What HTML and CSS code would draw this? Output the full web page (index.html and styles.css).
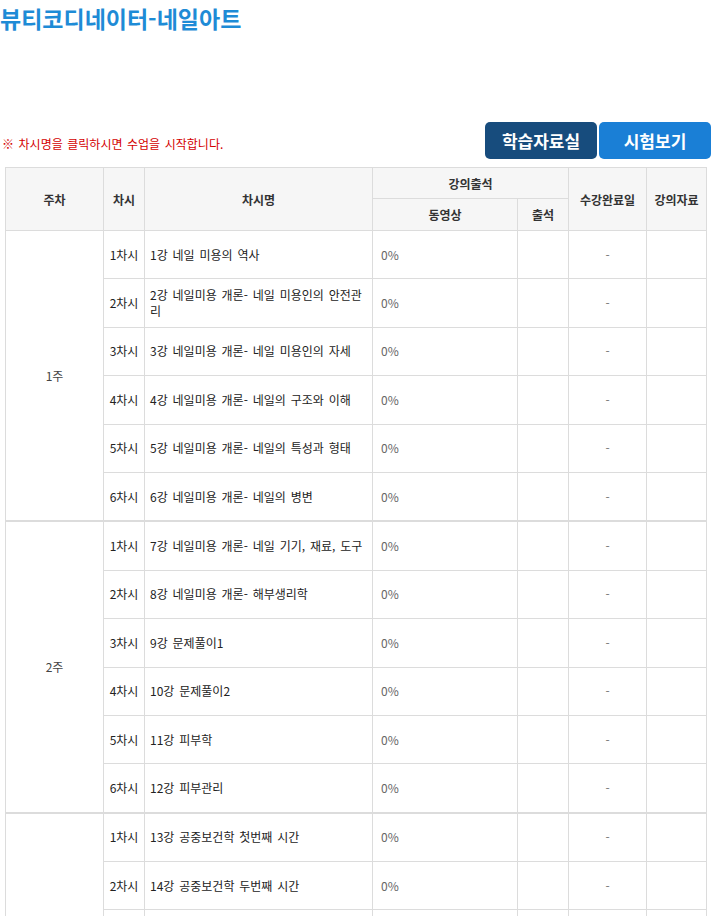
FILE: index.html
```html
<!DOCTYPE html>
<html lang="ko">
<head>
<meta charset="utf-8">
<title>뷰티코디네이터-네일아트</title>
<link rel="stylesheet" href="styles.css">
</head>
<body>
<div class="page">
  <h1 class="title">뷰티코디네이터-네일아트</h1>
  <div class="toolbar">
    <p class="note">※ 차시명을 클릭하시면 수업을 시작합니다.</p>
    <div class="buttons">
      <a class="btn btn-dark" href="#">학습자료실</a>
      <a class="btn btn-blue" href="#">시험보기</a>
    </div>
  </div>
  <table class="lessons">
    <colgroup>
      <col class="c-week"><col class="c-no"><col class="c-name"><col class="c-video"><col class="c-att"><col class="c-date"><col class="c-file">
    </colgroup>
    <thead>
      <tr class="h1">
        <th rowspan="2">주차</th>
        <th rowspan="2">차시</th>
        <th rowspan="2">차시명</th>
        <th colspan="2">강의출석</th>
        <th rowspan="2">수강완료일</th>
        <th rowspan="2">강의자료</th>
      </tr>
      <tr class="h2">
        <th>동영상</th>
        <th>출석</th>
      </tr>
    </thead>
    <tbody>
      <tr><td rowspan="6" class="week">1주</td><td class="no">1차시</td><td class="name">1강 네일 미용의 역사</td><td class="pct">0%</td><td></td><td class="date">-</td><td></td></tr>
      <tr><td class="no">2차시</td><td class="name">2강 네일미용 개론- 네일 미용인의 안전관리</td><td class="pct">0%</td><td></td><td class="date">-</td><td></td></tr>
      <tr><td class="no">3차시</td><td class="name">3강 네일미용 개론- 네일 미용인의 자세</td><td class="pct">0%</td><td></td><td class="date">-</td><td></td></tr>
      <tr><td class="no">4차시</td><td class="name">4강 네일미용 개론- 네일의 구조와 이해</td><td class="pct">0%</td><td></td><td class="date">-</td><td></td></tr>
      <tr><td class="no">5차시</td><td class="name">5강 네일미용 개론- 네일의 특성과 형태</td><td class="pct">0%</td><td></td><td class="date">-</td><td></td></tr>
      <tr><td class="no">6차시</td><td class="name">6강 네일미용 개론- 네일의 병변</td><td class="pct">0%</td><td></td><td class="date">-</td><td></td></tr>

      <tr class="wk"><td rowspan="6" class="week">2주</td><td class="no">1차시</td><td class="name">7강 네일미용 개론- 네일 기기, 재료, 도구</td><td class="pct">0%</td><td></td><td class="date">-</td><td></td></tr>
      <tr><td class="no">2차시</td><td class="name">8강 네일미용 개론- 해부생리학</td><td class="pct">0%</td><td></td><td class="date">-</td><td></td></tr>
      <tr><td class="no">3차시</td><td class="name">9강 문제풀이1</td><td class="pct">0%</td><td></td><td class="date">-</td><td></td></tr>
      <tr><td class="no">4차시</td><td class="name">10강 문제풀이2</td><td class="pct">0%</td><td></td><td class="date">-</td><td></td></tr>
      <tr><td class="no">5차시</td><td class="name">11강 피부학</td><td class="pct">0%</td><td></td><td class="date">-</td><td></td></tr>
      <tr><td class="no">6차시</td><td class="name">12강 피부관리</td><td class="pct">0%</td><td></td><td class="date">-</td><td></td></tr>

      <tr class="wk"><td rowspan="6" class="week">3주</td><td class="no">1차시</td><td class="name">13강 공중보건학 첫번째 시간</td><td class="pct">0%</td><td></td><td class="date">-</td><td></td></tr>
      <tr><td class="no">2차시</td><td class="name">14강 공중보건학 두번째 시간</td><td class="pct">0%</td><td></td><td class="date">-</td><td></td></tr>
      <tr><td class="no">3차시</td><td class="name">15강 공중보건학 세번째 시간</td><td class="pct">0%</td><td></td><td class="date">-</td><td></td></tr>
      <tr><td class="no">4차시</td><td class="name">16강 화장품학</td><td class="pct">0%</td><td></td><td class="date">-</td><td></td></tr>
      <tr><td class="no">5차시</td><td class="name">17강 문제풀이3</td><td class="pct">0%</td><td></td><td class="date">-</td><td></td></tr>
      <tr><td class="no">6차시</td><td class="name">18강 문제풀이4</td><td class="pct">0%</td><td></td><td class="date">-</td><td></td></tr>
    </tbody>
  </table>
</div>
</body>
</html>
```
FILE: styles.css
```css
html, body {
  margin: 0;
  padding: 0;
  background: #fff;
}
body {
  font-family: "Noto Sans CJK KR", "Noto Sans", sans-serif;
  color: #333;
}
.page {
  width: 711px;
  padding-top: 3px;
}
.title {
  margin: 0;
  font-size: 23px;
  line-height: 30px;
  font-weight: bold;
  color: #1e8bd6;
}
.toolbar {
  display: flex;
  justify-content: space-between;
  align-items: center;
  margin-top: 89px;
  padding-left: 2px;
}
.note {
  margin: 6px 0 0;
  font-size: 12px;
  word-spacing: 1.2px;
  color: #d40000;
}
.buttons {
  display: flex;
  gap: 2px;
}
.btn {
  width: 112px;
  height: 37px;
  border-radius: 5px;
  display: flex;
  align-items: center;
  justify-content: center;
  color: #fff;
  font-size: 17px;
  font-weight: bold;
  text-decoration: none;
}
.btn-dark { background: #174c7d; }
.btn-blue { background: #1a7fd6; }

.lessons {
  margin: 8px 0 0 5px;
  width: 701px;
  border-collapse: collapse;
  table-layout: fixed;
  font-size: 12px;
}
.c-week { width: 98px; }
.c-no { width: 41px; }
.c-name { width: 228px; }
.c-video { width: 145px; }
.c-att { width: 51px; }
.c-date { width: 78px; }
.c-file { width: 60px; }

.lessons th {
  background: #f6f6f6;
  border: 1px solid #dcdcdc;
  font-weight: bold;
  color: #333;
  padding: 0;
}
.lessons .h1 th { height: 30px; }
.lessons .h2 th { height: 31px; }

.lessons td {
  border: 1px solid #dcdcdc;
  height: 47.4px;
  padding: 0;
  color: #333;
  line-height: 16px;
}
.lessons tr.wk td { border-top: 2px solid #dcdcdc; }
.lessons td.week { text-align: center; color: #444; }
.lessons td.no { text-align: center; color: #222; }
.lessons td.name { padding: 0 5px; color: #222; word-spacing: 1.5px; }
.lessons td.pct { padding-left: 8px; color: #666; }
.lessons td.date { text-align: center; color: #777; }
```
